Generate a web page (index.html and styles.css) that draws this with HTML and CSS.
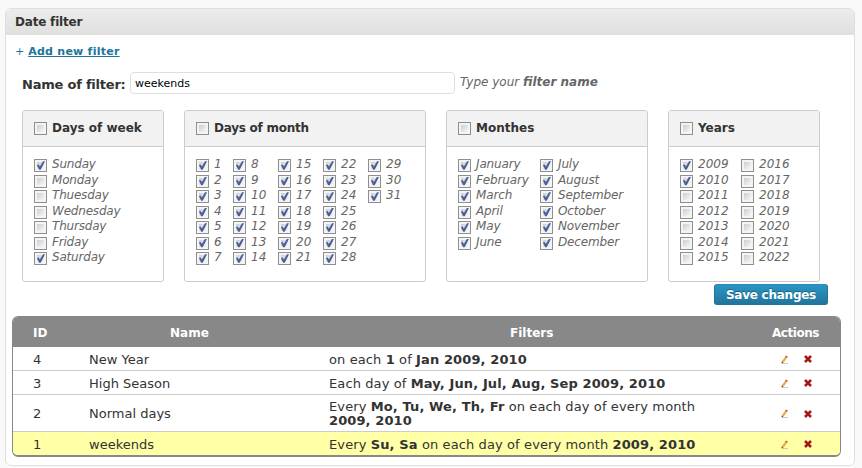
FILE: index.html
```html
<!DOCTYPE html>
<html lang="en">
<head>
<meta charset="utf-8">
<title>Date filter</title>
<link rel="stylesheet" href="styles.css">
</head>
<body>
<svg class="defs" aria-hidden="true">
  <symbol id="pencil" viewBox="0 0 8 9">
    <path d="M1 8.5h6" stroke="#c9c9c9"/>
    <path d="M1.6 7.2 5 2.4" stroke="#edaf37" stroke-width="2.3"/>
    <path d="M5 2.4 5.9 1.1" stroke="#b5504a" stroke-width="2.3"/>
    <path d="M.8 8.2 1.6 6.9" stroke="#5d523c" stroke-width="1.3"/>
  </symbol>
  <symbol id="cross" viewBox="0 0 8 8">
    <path d="M1 1 7 7M7 1 1 7" stroke="#a51616" stroke-width="2.5"/>
  </symbol>
</svg>
<main class="panel">
  <h1 class="panel-title"><span>Date filter</span></h1>
  <p class="add">+ <a href="#">Add new filter</a></p>
  <div class="name-row">
    <label for="name">Name of filter:</label>
    <input id="name" type="text" value="weekends">
    <em class="hint">Type your <b>filter name</b></em>
  </div>
  <div class="cards">
    <section class="card week">
      <h2><i class="cb"></i><span>Days of week</span></h2>
      <div class="options">
        <label><i class="cb on"></i>Sunday</label>
        <label><i class="cb"></i>Monday</label>
        <label><i class="cb"></i>Thuesday</label>
        <label><i class="cb"></i>Wednesday</label>
        <label><i class="cb"></i>Thursday</label>
        <label><i class="cb"></i>Friday</label>
        <label><i class="cb on"></i>Saturday</label>
      </div>
    </section>
    <section class="card month-days">
      <h2><i class="cb"></i><span>Days of month</span></h2>
      <div class="options">
        <label><i class="cb on"></i>1</label>
        <label><i class="cb on"></i>2</label>
        <label><i class="cb on"></i>3</label>
        <label><i class="cb on"></i>4</label>
        <label><i class="cb on"></i>5</label>
        <label><i class="cb on"></i>6</label>
        <label><i class="cb on"></i>7</label>
        <label><i class="cb on"></i>8</label>
        <label><i class="cb on"></i>9</label>
        <label><i class="cb on"></i>10</label>
        <label><i class="cb on"></i>11</label>
        <label><i class="cb on"></i>12</label>
        <label><i class="cb on"></i>13</label>
        <label><i class="cb on"></i>14</label>
        <label><i class="cb on"></i>15</label>
        <label><i class="cb on"></i>16</label>
        <label><i class="cb on"></i>17</label>
        <label><i class="cb on"></i>18</label>
        <label><i class="cb on"></i>19</label>
        <label><i class="cb on"></i>20</label>
        <label><i class="cb on"></i>21</label>
        <label><i class="cb on"></i>22</label>
        <label><i class="cb on"></i>23</label>
        <label><i class="cb on"></i>24</label>
        <label><i class="cb on"></i>25</label>
        <label><i class="cb on"></i>26</label>
        <label><i class="cb on"></i>27</label>
        <label><i class="cb on"></i>28</label>
        <label><i class="cb on"></i>29</label>
        <label><i class="cb on"></i>30</label>
        <label><i class="cb on"></i>31</label>
      </div>
    </section>
    <section class="card months">
      <h2><i class="cb"></i><span>Monthes</span></h2>
      <div class="options">
        <label><i class="cb on"></i>January</label>
        <label><i class="cb on"></i>February</label>
        <label><i class="cb on"></i>March</label>
        <label><i class="cb on"></i>April</label>
        <label><i class="cb on"></i>May</label>
        <label><i class="cb on"></i>June</label>
        <label><i class="cb on"></i>July</label>
        <label><i class="cb on"></i>August</label>
        <label><i class="cb on"></i>September</label>
        <label><i class="cb on"></i>October</label>
        <label><i class="cb on"></i>November</label>
        <label><i class="cb on"></i>December</label>
      </div>
    </section>
    <section class="card years">
      <h2><i class="cb"></i><span>Years</span></h2>
      <div class="options">
        <label><i class="cb on"></i>2009</label>
        <label><i class="cb on"></i>2010</label>
        <label><i class="cb"></i>2011</label>
        <label><i class="cb"></i>2012</label>
        <label><i class="cb"></i>2013</label>
        <label><i class="cb"></i>2014</label>
        <label><i class="cb"></i>2015</label>
        <label><i class="cb"></i>2016</label>
        <label><i class="cb"></i>2017</label>
        <label><i class="cb"></i>2018</label>
        <label><i class="cb"></i>2019</label>
        <label><i class="cb"></i>2020</label>
        <label><i class="cb"></i>2021</label>
        <label><i class="cb"></i>2022</label>
      </div>
    </section>
  </div>
  <button class="save" type="button">Save changes</button>
  <div class="table">
    <div class="row head"><span class="id">ID</span><span>Name</span><span>Filters</span><span class="act">Actions</span></div>
    <div class="row"><span class="id">4</span><span>New Year</span><span class="rule">on each <b>1</b> of <b>Jan 2009, 2010</b></span>
      <span class="icons"><svg class="pencil"><use href="#pencil"/></svg><svg class="cross"><use href="#cross"/></svg></span></div>
    <div class="row"><span class="id">3</span><span>High Season</span><span class="rule">Each day of <b>May, Jun, Jul, Aug, Sep 2009, 2010</b></span>
      <span class="icons"><svg class="pencil"><use href="#pencil"/></svg><svg class="cross"><use href="#cross"/></svg></span></div>
    <div class="row tall"><span class="id">2</span><span>Normal days</span><span class="rule">Every <b>Mo, Tu, We, Th, Fr</b> on each day of every month<br><b>2009, 2010</b></span>
      <span class="icons"><svg class="pencil"><use href="#pencil"/></svg><svg class="cross"><use href="#cross"/></svg></span></div>
    <div class="row active"><span class="id">1</span><span>weekends</span><span class="rule">Every <b>Su, Sa</b> on each day of every month <b>2009, 2010</b></span>
      <span class="icons"><svg class="pencil"><use href="#pencil"/></svg><svg class="cross"><use href="#cross"/></svg></span></div>
  </div>
</main>
</body>
</html>
```
FILE: styles.css
```css
* { box-sizing: border-box; }
body {
  margin: 0;
  padding: 8px 7px 0 5px;
  background: #f9f9f9;
  color: #333;
  font: 13px/13px "DejaVu Sans", sans-serif;
}
.defs { display: none; }
.panel {
  height: 458px;
  border: 1px solid #dfdfdf;
  border-radius: 6px;
  background: #fff;
  overflow: hidden;
}
.panel-title {
  margin: 0;
  height: 26px;
  padding-left: 9px;
  background: linear-gradient(#ececec, #dfdfdf);
  font-size: 12px;
  line-height: 27px;
  letter-spacing: -.2px;
}
.add {
  margin: 0;
  height: 37px;
  padding: 10px 0 0 9px;
  color: #21759b;
  font-size: 11px;
}
.add a { color: #21759b; font-weight: bold; letter-spacing: .25px; margin-left: .5px; }
.name-row {
  display: flex;
  height: 38px;
  padding-left: 16px;
}
.name-row label { width: 108px; font-weight: bold; line-height: 25px; letter-spacing: -.22px; white-space: nowrap; }
.name-row input {
  width: 325px;
  height: 22px;
  padding: 0 4px;
  border: 1px solid #dfdfdf;
  border-radius: 4px;
  color: #000;
  font: 11px "DejaVu Sans", sans-serif;
}
.hint { margin-left: 5px; color: #666; font-size: 12px; line-height: 21px; }
.cards { display: flex; gap: 20px; padding-left: 16px; }
.card {
  height: 172px;
  border: 1px solid #ccc;
  border-radius: 3px;
  overflow: hidden;
}
.week { width: 142px; }
.month-days { width: 242px; }
.months { width: 202px; }
.years { width: 152px; }
.card h2 {
  display: flex;
  margin: 0;
  height: 36px;
  padding: 11px 0 0 11px;
  border-bottom: 1px solid #ccc;
  background: #f2f2f2;
  font-size: 12px;
  line-height: 12px;
}
.month-days h2 { letter-spacing: -.25px; }
.card h2 .cb { margin: 0 5px 0 0; }
.options {
  display: grid;
  grid-auto-flow: column;
  grid-template-rows: repeat(7, 15.5px);
  padding: 9px 0 0 11px;
  margin-top: 3px;
  color: #666;
  font-size: 12px;
  font-style: italic;
}
.week .options { grid-template-columns: 130px; letter-spacing: -.2px; }
.month-days .options { grid-template-columns: 37px 45px 45px 45px 45px; }
.months .options { grid-template-columns: 82px 100px; grid-template-rows: repeat(6, 15.5px); letter-spacing: -.15px; }
.years .options { grid-template-columns: 61px 61px; }
.options label { display: flex; line-height: 10px; white-space: nowrap; }
.cb {
  position: relative;
  flex: none;
  width: 13px;
  height: 13px;
  margin-right: 5px;
  border: 1px solid #8e8f8f;
  background: linear-gradient(135deg, #cbcfd5, #f6f6f6) content-box, #f4f4f4;
  padding: 2px;
}
.on::after {
  content: "";
  position: absolute;
  inset: 1px;
  background: #4a5f97;
  clip-path: polygon(10% 45%, 30% 40%, 43% 62%, 78% 3%, 100% 3%, 52% 98%, 35% 98%);
}
.save {
  display: block;
  width: 114px;
  height: 21px;
  margin: 2px 0 0 708px;
  padding: 0;
  border: 1px solid #21759b;
  border-top-color: #2a8bba;
  border-radius: 3px;
  background: linear-gradient(#2a95c5, #21759b);
  color: #fff;
  font: bold 12px/21px "DejaVu Sans", sans-serif;
  letter-spacing: -.25px;
  text-shadow: 0 -1px 0 rgba(0, 0, 0, .3);
}
.table {
  width: 829px;
  height: 141px;
  margin: 11px 0 0 6px;
  border: 1px solid #888;
  border-bottom-width: 2px;
  border-radius: 6px;
  overflow: hidden;
}
.row {
  display: grid;
  grid-template-columns: 56px 240px 404px 127px;
  align-items: center;
  height: 24px;
  padding: 1px 0 0 20px;
  border-bottom: 1px solid #ccc;
}
.row.head {
  height: 30px;
  padding-top: 2px;
  border: 0;
  background: #888;
  color: #fff;
  font-size: 12px;
  font-weight: bold;
}
.head span:nth-child(2) { padding-left: 81px; }
.head span:nth-child(3) { padding-left: 181px; }
.head .act { padding-left: 39px; letter-spacing: -.45px; }
.row.tall { height: 37px; }
.rule { letter-spacing: .11px; }
.tall .rule { line-height: 13.5px; }
.row.active { background: #ffffa6; }
.icons { display: flex; align-items: center; padding-left: 48px; }
.icons svg { fill: none; display: block; }
.pencil { width: 8px; height: 9px; }
.cross { width: 8px; height: 8px; margin-left: 15px; }
```
